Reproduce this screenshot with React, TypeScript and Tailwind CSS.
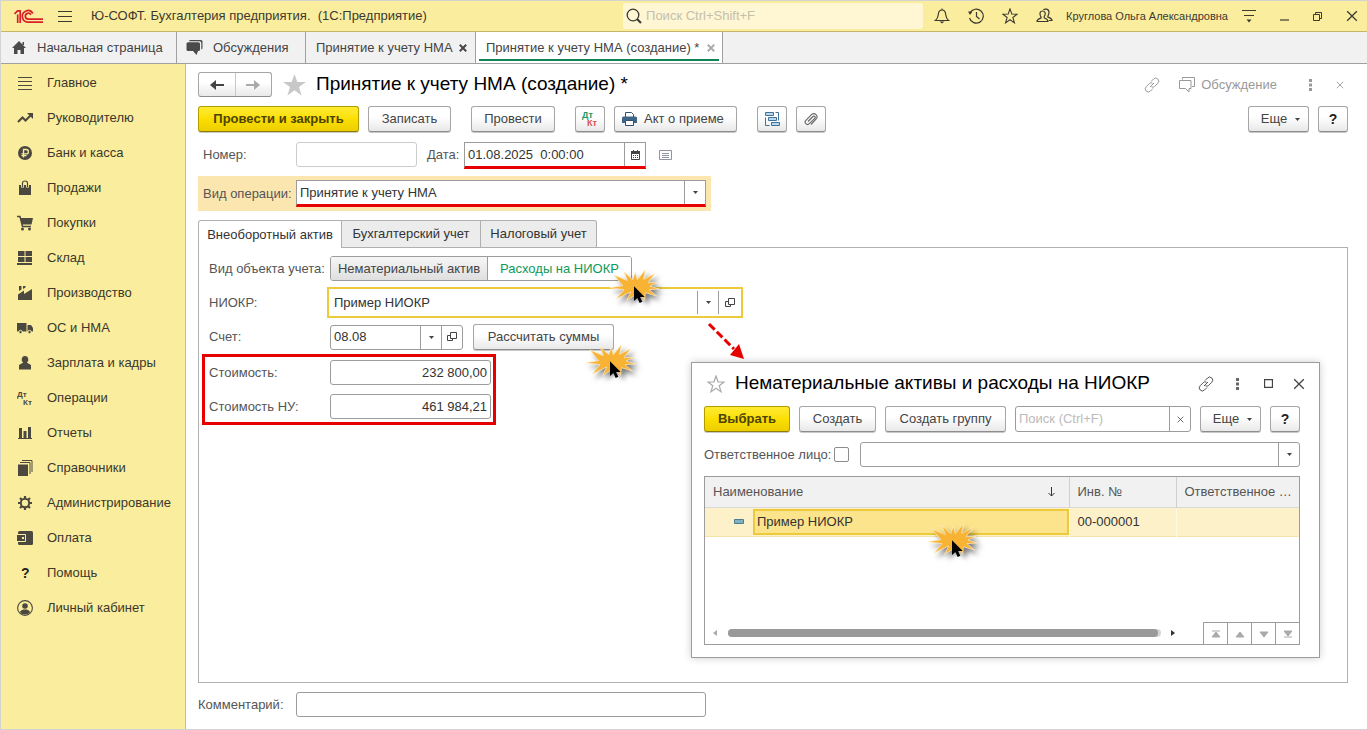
import { useState, type ReactNode } from "react";

const RAISED =
  "border border-[#a6a6a6] border-b-[#8c8c8c] rounded-[3px] bg-linear-to-b from-white from-40% to-[#e9e9e9] shadow-[0_1px_0_#c9c9c9] text-[#444]";
const PRIMARY =
  "border border-[#b39b00] border-b-[#8f7c00] rounded-[3px] bg-linear-to-b from-[#ffeb2e] via-[#fbdf00] to-[#ecce00] shadow-[0_1px_0_#c9c9c9] font-bold text-[#4d4300]";
const FIELD = "flex border border-[#9c9c9c] rounded-[3px] bg-white";
const INPUT = "min-w-0 flex-1 bg-transparent px-[3px] text-[#333] outline-none";

function Svg({
  w,
  h,
  box,
  className = "",
  children,
}: {
  w: number;
  h: number;
  box?: string;
  className?: string;
  children: ReactNode;
}) {
  return (
    <svg
      width={w}
      height={h}
      viewBox={box ?? `0 0 ${w} ${h}`}
      className={`shrink-0 ${className}`}
      fill="none"
      stroke="currentColor"
      aria-hidden="true"
    >
      {children}
    </svg>
  );
}

function Caret() {
  return (
    <Svg w={5} h={3}>
      <path d="M0 0h5L2.5 3z" fill="currentColor" stroke="none" />
    </Svg>
  );
}

function OpenIcon() {
  return (
    <Svg w={10} h={10}>
      <path d="M3.5.5h6v6h-6z" />
      <path d="M3.5 3.5h-3v5h5v-2" />
    </Svg>
  );
}

function LinkIcon() {
  return (
    <Svg w={16} h={16}>
      <path d="M7 4.500 9.500 2a3 3 0 0 1 4.300 0 3 3 0 0 1 0 4.300l-3 3a3 3 0 0 1-3.300.6M9 11.500 6.500 14a3 3 0 0 1-4.300 0 3 3 0 0 1 0-4.300l3-3a3 3 0 0 1 3.300-.6M6 10l4-4" />
    </Svg>
  );
}

function DotsIcon() {
  return (
    <Svg w={3} h={12}>
      <path
        d="M0 0h3v3H0zM0 4.500h3v3H0zM0 9h3v3H0z"
        fill="currentColor"
        stroke="none"
      />
    </Svg>
  );
}

function CrossIcon({ size, bold }: { size: number; bold?: boolean }) {
  return (
    <Svg w={size} h={size} box="0 0 10 10">
      <path d="M1 1l8 8M9 1 1 9" strokeWidth={bold ? 2.4 : 1.1} />
    </Svg>
  );
}

function StarIcon({ size }: { size: number }) {
  return (
    <Svg w={size} h={size} box="0 0 18 18">
      <path d="M9 1l2 5.800 6 .2-4.800 3.700 1.800 6L9 13.200 4 16.700l1.800-6L1 7l6-.2z" strokeWidth="1.200" />
    </Svg>
  );
}

const NAV: { label: string; icon: ReactNode }[] = [
  {
    label: "Главное",
    icon: <path d="M1 2.500h14M1 6.500h14M1 10.500h14M1 14.500h14" />,
  },
  {
    label: "Руководителю",
    icon: (
      <>
        <path d="M1 12l4.500-4.500 3 3L14 5" strokeWidth="2" />
        <path d="M10 3h6v6z" fill="currentColor" stroke="none" />
      </>
    ),
  },
  {
    label: "Банк и касса",
    icon: (
      <>
        <circle cx="8" cy="8" r="7" fill="currentColor" stroke="none" />
        <path
          d="M6.500 12.500V4.500h2.700a2.200 2.200 0 0 1 0 4.400H4.500M4.500 10.700h5"
          stroke="#fbed9e"
          strokeWidth="1.300"
        />
      </>
    ),
  },
  {
    label: "Продажи",
    icon: (
      <>
        <path d="M2 5h12v10H2z" fill="currentColor" stroke="none" />
        <path d="M5.500 7.500V3a2.500 2 0 0 1 5 0v4.500" stroke="#fbed9e" strokeWidth="3" />
        <path d="M5.500 7V3a2.500 2 0 0 1 5 0v4" strokeWidth="1.200" />
      </>
    ),
  },
  {
    label: "Покупки",
    icon: (
      <>
        <path d="M0 1.500h3l2.500 10H14" strokeWidth="1.500" />
        <path d="M3.500 3H16l-1.500 6.500H5z" fill="currentColor" stroke="none" />
        <circle cx="5.500" cy="14" r="1.500" fill="currentColor" stroke="none" />
        <circle cx="12.500" cy="14" r="1.500" fill="currentColor" stroke="none" />
      </>
    ),
  },
  {
    label: "Склад",
    icon: (
      <path
        d="M1 1h6.500v5H1zM8.500 1H15v5H8.500zM1 7h6.500v5H1zM8.500 7H15v5H8.500zM0 13h15v2H0z"
        fill="currentColor"
        stroke="none"
      />
    ),
  },
  {
    label: "Производство",
    icon: (
      <path
        d="M1 15V9.500l6-4V9l8-5v11zM2 1h2.500v3.500L2 6zM6 1h2.500v1.500L6 4z"
        fill="currentColor"
        stroke="none"
      />
    ),
  },
  {
    label: "ОС и НМА",
    icon: (
      <>
        <path
          d="M0 3h9.500v8.500H0zM10.500 5H14l2 3v3.500h-5.500z"
          fill="currentColor"
          stroke="none"
        />
        <circle cx="3.500" cy="12" r="1.700" fill="currentColor" stroke="#fbed9e" />
        <circle cx="12.500" cy="12" r="1.700" fill="currentColor" stroke="#fbed9e" />
      </>
    ),
  },
  {
    label: "Зарплата и кадры",
    icon: (
      <path
        d="M8 1a3.200 3.500 0 0 1 1.800 6.500L14 10v4.500H2V10l4.200-2.500A3.200 3.500 0 0 1 8 1z"
        fill="currentColor"
        stroke="none"
      />
    ),
  },
  {
    label: "Операции",
    icon: (
      <g fill="currentColor" stroke="none" fontSize="8" fontWeight="bold">
        <text x="0" y="7">Дт</text>
        <text x="6" y="15">Кт</text>
      </g>
    ),
  },
  {
    label: "Отчеты",
    icon: (
      <path
        d="M2 3h3v10H2zM6.500 6h3v7h-3zM11 2h3v11h-3zM1 13h14v1H1z"
        fill="currentColor"
        stroke="none"
      />
    ),
  },
  {
    label: "Справочники",
    icon: (
      <>
        <path d="M1 4.500h10V16H1z" fill="currentColor" stroke="none" />
        <path d="M3 2.500h10V14M5 .5h10V12" />
      </>
    ),
  },
  {
    label: "Администрирование",
    icon: (
      <>
        <circle cx="8" cy="8" r="4.200" strokeWidth="2" />
        <path
          d="M8 1v2.500M8 12.500V15M1 8h2.500M12.500 8H15M3 3l2 2M11 11l2 2M3 13l2-2M11 5l2-2"
          strokeWidth="2.200"
        />
      </>
    ),
  },
  {
    label: "Оплата",
    icon: (
      <>
        <rect x="1" y="1" width="15" height="14" rx="1.500" fill="currentColor" stroke="none" />
        <path d="M0 4.500h8.500v7H0" stroke="#fbed9e" />
        <path d="M0 5h8v6H0z" fill="currentColor" stroke="none" />
        <path d="M5 7h2v2H5z" fill="#fbed9e" stroke="none" />
      </>
    ),
  },
  {
    label: "Помощь",
    icon: (
      <text x="4" y="13" fill="#222" stroke="none" fontSize="14" fontWeight="bold">
        ?
      </text>
    ),
  },
  {
    label: "Личный кабинет",
    icon: (
      <>
        <circle cx="8" cy="8" r="7.400" strokeWidth="1.100" />
        <circle cx="8" cy="6" r="2.800" fill="currentColor" stroke="none" />
        <path
          d="M2.800 12c1.500-2 3-2.500 5.200-2.500s3.700.5 5.200 2.500A6.500 6.500 0 0 1 8 14.500 6.500 6.500 0 0 1 2.800 12z"
          fill="currentColor"
          stroke="none"
        />
      </>
    ),
  },
];

function TitleBar() {
  return (
    <header className="flex h-[31px] shrink-0 items-center border-b border-[#c4b56a] bg-[#fbed9e] text-[#3c3a30]">
      <Svg w={30} h={16} className="ml-[13px] text-[#d6202a]">
        <path d="M.5 6l3-3.200H6.200V15M3.700 15V6.500" strokeWidth="1.700" />
        <path
          d="M18.800 5.500A5.600 5.800 0 1 0 14 14.200H29M16.800 6.800a2.900 3 0 1 0-2.600 4.400H29"
          strokeWidth="1.700"
        />
      </Svg>
      <button type="button" aria-label="Меню" className="ml-[14px]">
        <Svg w={14} h={11}>
          <path d="M0 .5h14M0 5.500h14M0 10.500h14" />
        </Svg>
      </button>
      <h1 className="ml-[19px] whitespace-pre">
        Ю-СОФТ. Бухгалтерия предприятия.{"  "}(1С:Предприятие)
      </h1>
      <div className="ml-auto flex h-[26px] w-[300px] items-center gap-1 rounded-[3px] bg-[#fff6d3] px-[3px]">
        <Svg w={16} h={16}>
          <circle cx="7" cy="7" r="5.800" strokeWidth="1.300" />
          <path d="M11 11l4 4" strokeWidth="2.200" />
        </Svg>
        <input
          aria-label="Поиск"
          placeholder="Поиск Ctrl+Shift+F"
          className="min-w-0 flex-1 bg-transparent outline-none placeholder:text-[#c4c0ad]"
        />
      </div>
      <div className="ml-[11px] flex items-center gap-[18px]">
        <button type="button" aria-label="Уведомления">
          <Svg w={16} h={16}>
            <path d="M1.500 12.500c2-1.500 2.500-3.500 2.800-6C4.500 4 5.500 2 8 2s3.500 2 3.700 4.500c.3 2.500.8 4.500 2.800 6z" strokeWidth="1.200" />
            <path d="M8 2V.5" />
            <path d="M5.500 13.500h5L8 15.500z" fill="currentColor" stroke="none" />
          </Svg>
        </button>
        <button type="button" aria-label="История">
          <Svg w={16} h={16}>
            <path d="M2 5a7 7 0 1 1-.5 5M8.500 4v4.500l3 2.500" strokeWidth="1.200" />
            <path d="M0 3.500h4.500L2 7z" fill="currentColor" stroke="none" />
          </Svg>
        </button>
        <button type="button" aria-label="Избранное">
          <StarIcon size={16} />
        </button>
        <button type="button" aria-label="Пользователь">
          <Svg w={18} h={16}>
            <path
              d="M1 13.500c0-2 1.500-2.500 4-3.500.5-.5 0-1-.5-2C3.500 5.500 4 3 6.500 3s3.500 2.500 2 5c-.5 1-.5 1.500 0 2 2.500 1 3.500 1.500 3.500 3.500zM7.500 2c1-1.500 5.500-1.500 5.500 2.500 0 2-1.200 3-1.200 4.500 2.200 1 4.200 1.500 4.200 3.500h-3"
              strokeWidth="1.200"
            />
          </Svg>
        </button>
      </div>
      <span className="ml-3 text-[11px]">Круглова Ольга Александровна</span>
      <div className="mr-[9px] ml-[14px] flex items-center gap-6">
        <button type="button" aria-label="Настройки">
          <Svg w={14} h={14}>
            <path d="M0 1.500h14M2 6.500h10" strokeWidth="1.200" />
            <path d="M4.500 10.500h5L7 13.500z" fill="currentColor" stroke="none" />
          </Svg>
        </button>
        <button type="button" aria-label="Свернуть">
          <Svg w={9} h={10}>
            <path d="M0 9h9" strokeWidth="1.200" />
          </Svg>
        </button>
        <button type="button" aria-label="Развернуть">
          <Svg w={9} h={9}>
            <path d="M.5 2.500h6v6h-6zM2.500 2.500v-2h6v6h-2" />
          </Svg>
        </button>
        <button type="button" aria-label="Закрыть">
          <CrossIcon size={12} />
        </button>
      </div>
    </header>
  );
}

function WindowTabs() {
  return (
    <nav className="flex h-8 shrink-0 border-b border-[#a0a0a0] bg-[#f1f1f1] text-[#444]">
      <button type="button" className="flex w-[176px] items-center border-r border-[#a0a0a0] pl-[10px]">
        <Svg w={16} h={14} className="text-[#4a4a4a]">
          <path
            d="M8 0 1 7h2v6h3.500V9h3v4H13V7h2zM11.500 1H13v3h-1.500z"
            fill="currentColor"
            stroke="none"
          />
        </Svg>
        <span className="ml-[10px]">Начальная страница</span>
      </button>
      <button type="button" className="flex w-[129px] items-center border-r border-[#a0a0a0] pl-[9px]">
        <Svg w={18} h={16} className="text-[#4a4a4a]">
          <path
            d="M4 0h11a1.500 1.500 0 0 1 1.500 1.500V8a1.500 1.500 0 0 1-1.200 1.400V3A1.700 1.700 0 0 0 13.600 1.300H3A1.300 1.300 0 0 1 4 0z"
            fill="currentColor"
            stroke="none"
          />
          <path
            d="M2 2.300h10.500A1.500 1.500 0 0 1 14 3.800v5.700a1.500 1.500 0 0 1-1.500 1.500H12l-1.500 4L7 11H2A1.500 1.500 0 0 1 .5 9.500V3.800A1.500 1.500 0 0 1 2 2.300z"
            fill="currentColor"
            stroke="none"
          />
        </Svg>
        <span className="ml-[9px]">Обсуждения</span>
      </button>
      <div className="flex w-[170px] items-center justify-between border-r border-[#a0a0a0] pr-2 pl-[10px]">
        <button type="button">Принятие к учету НМА</button>
        <button type="button" aria-label="Закрыть вкладку">
          <CrossIcon size={8} bold />
        </button>
      </div>
      <div className="flex w-[247px] border-r border-[#a0a0a0] bg-white px-[3px] pb-[2px]">
        <div className="flex flex-1 items-center justify-between border-b-2 border-[#0f8457] pt-1 pr-1 pl-[7px]">
          <button type="button">Принятие к учету НМА (создание) *</button>
          <button type="button" aria-label="Закрыть вкладку" className="text-[#aaa]">
            <CrossIcon size={8} bold />
          </button>
        </div>
      </div>
    </nav>
  );
}

function Sidebar() {
  return (
    <aside className="w-[185px] shrink-0 border-r border-[#c9bf85] bg-[#fbed9e] pt-px">
      {NAV.map((item) => (
        <a
          key={item.label}
          href="#"
          className="flex h-[35px] items-center gap-[13px] pl-4 text-[#3a382c]"
        >
          <Svg w={17} h={16} className="text-[#4b4840]">
            {item.icon}
          </Svg>
          {item.label}
        </a>
      ))}
    </aside>
  );
}

function FormHeader() {
  return (
    <div className="flex h-[25px] items-center text-[#999]">
      <div className="flex h-[25px] w-[74px] overflow-hidden rounded-[3px] border border-[#a6a6a6] border-b-[#8c8c8c] bg-linear-to-b from-white from-40% to-[#e9e9e9]">
        <button type="button" aria-label="Назад" className="flex flex-1 items-center justify-center border-r border-[#c8c8c8] text-[#444]">
          <Svg w={14} h={10}>
            <path d="M3 5h11" strokeWidth="2" />
            <path d="M6 0v10L0 5z" fill="currentColor" stroke="none" />
          </Svg>
        </button>
        <button type="button" aria-label="Вперед" className="flex flex-1 items-center justify-center text-[#aaa]">
          <Svg w={14} h={10}>
            <path d="M0 5h11" strokeWidth="2" />
            <path d="M8 0v10l6-5z" fill="currentColor" stroke="none" />
          </Svg>
        </button>
      </div>
      <button type="button" aria-label="В избранное" className="ml-[11px] text-[#c8c8c8]">
        <Svg w={23} h={22}>
          <path
            d="M11.500 0l2.800 8H23l-7 5 2.600 8.500-7.100-5.200-7.100 5.200L7 13 0 8h8.700z"
            fill="currentColor"
            stroke="none"
          />
        </Svg>
      </button>
      <h2 className="ml-[10px] text-[19px] text-black">Принятие к учету НМА (создание) *</h2>
      <button type="button" aria-label="Ссылка" className="ml-auto">
        <LinkIcon />
      </button>
      <button type="button" className="ml-[18px] flex items-center gap-[6px]">
        <Svg w={17} h={16}>
          <path d="M4.500 2.500v-2h12v9h-2.500M1.500 3.500H13v8h-2v3.500l-3.500-3.500h-6z" />
        </Svg>
        Обсуждение
      </button>
      <button type="button" aria-label="Меню формы" className="ml-8">
        <DotsIcon />
      </button>
      <button type="button" aria-label="Закрыть форму" className="mr-1 ml-6">
        <CrossIcon size={8} />
      </button>
    </div>
  );
}

function Toolbar() {
  return (
    <div className="mt-[9px] flex h-[26px]">
      <button type="button" className={`w-[161px] ${PRIMARY}`}>
        Провести и закрыть
      </button>
      <button type="button" className={`ml-[9px] w-[83px] ${RAISED}`}>
        Записать
      </button>
      <button type="button" className={`ml-5 w-[84px] ${RAISED}`}>
        Провести
      </button>
      <button type="button" aria-label="Дт Кт" className={`ml-5 flex w-[30px] items-center justify-center ${RAISED}`}>
        <Svg w={18} h={16}>
          <g stroke="none" fontSize="9" fontWeight="bold">
            <text x="1" y="7" fill="#1d9660">Дт</text>
            <text x="6" y="15" fill="#d9534f">Кт</text>
          </g>
        </Svg>
      </button>
      <button type="button" className={`ml-[9px] flex w-[123px] items-center gap-[7px] pl-[7px] ${RAISED}`}>
        <Svg w={15} h={14} className="text-[#30506c]">
          <path d="M3.500 5V.5h6l2 2V5" fill="#fff" />
          <path d="M1.500 4.500h12A1.500 1.500 0 0 1 15 6v5H0V6a1.500 1.500 0 0 1 1.500-1.500z" fill="#3d6587" stroke="none" />
          <path d="M3.500 8.500h8v5h-8z" fill="#fff" />
        </Svg>
        Акт о приеме
      </button>
      <button type="button" aria-label="Структура подчиненности" className={`ml-5 flex w-[30px] items-center justify-center ${RAISED}`}>
        <Svg w={15} h={15} className="text-[#3f7296]">
          <path d="M.5.5h8v3h-8zM3.500 5.500h8v3h-8zM6.500 10.500h8v3h-8z" fill="#b9d8ee" />
          <path d="M10.500.5h3v8M4.500 13.500h-4v-8" />
        </Svg>
      </button>
      <button type="button" aria-label="Файлы" className={`ml-[9px] flex w-[30px] items-center justify-center ${RAISED}`}>
        <Svg w={14} h={14} className="text-[#666]">
          <path
            d="M4 9.500l5-5a1.200 1.200 0 0 1 1.800 1.800l-5.500 5.400a2.300 2.300 0 0 1-3.400-3.400L7.500 2.700a3.100 3.100 0 0 1 4.500 4.500L7 12.500"
            strokeWidth="1.100"
          />
        </Svg>
      </button>
      <button type="button" className={`ml-auto flex w-[61px] items-center justify-center gap-2 pl-1 ${RAISED}`}>
        Еще <Caret />
      </button>
      <button type="button" aria-label="Справка" className={`ml-[9px] w-[30px] ${RAISED}`}>
        <b className="text-sm text-[#222]">?</b>
      </button>
    </div>
  );
}

function HeaderFields() {
  return (
    <>
      <div className="mt-[10px] flex h-[27px] items-start pl-[5px] text-[#555]">
        <label htmlFor="number" className="w-[93px] leading-[26px]">
          Номер:
        </label>
        <div className="flex h-[25px] w-[121px] rounded-[3px] border border-[#ccc] bg-white">
          <input id="number" className={INPUT} />
        </div>
        <label htmlFor="date" className="ml-[10px] w-[37px] leading-[26px] whitespace-nowrap">
          Дата:
        </label>
        <div className="flex h-[27px] w-[182px] border border-b-[3px] border-[#9c9c9c] border-b-[#e60000] bg-white">
          <input id="date" defaultValue="01.08.2025  0:00:00" className={INPUT} />
          <button type="button" aria-label="Выбрать дату" className="flex w-[21px] items-center justify-center border-l border-[#9c9c9c] text-[#444]">
            <Svg w={9} h={10}>
              <path d="M.5 2.500h8v7h-8z" />
              <path d="M0 1h9v3H0zM2 0h1v1H2zM6 0h1v1H6z" fill="currentColor" stroke="none" />
              <path d="M2 5.500h5M2 7.500h5" strokeDasharray="1 1" />
            </Svg>
          </button>
        </div>
        <button type="button" aria-label="Режим нумерации" className="mt-2 ml-[13px] text-[#8d93a3]">
          <Svg w={13} h={10}>
            <path d="M.5.5h12v9H.5zM3 3.500h7M3 5.500h7M3 7.500h7" />
          </Svg>
        </button>
      </div>
      <div className="mt-[7px] flex h-[35px] w-[513px] items-center bg-[#fce6b0] pl-[5px] text-[#555]">
        <label htmlFor="operation" className="w-[93px] whitespace-nowrap">
          Вид операции:
        </label>
        <div className="relative flex h-[27px] w-[410px] border border-b-[3px] border-[#9c9c9c] border-b-[#e60000] bg-white">
          <select id="operation" className={`appearance-none ${INPUT}`}>
            <option>Принятие к учету НМА</option>
          </select>
          <span className="flex w-[21px] items-center justify-center border-l border-[#9c9c9c] text-[#444]">
            <Caret />
          </span>
        </div>
      </div>
    </>
  );
}

const TABS = [
  { label: "Внеоборотный актив", width: "w-[144px]" },
  { label: "Бухгалтерский учет", width: "w-[139px]" },
  { label: "Налоговый учет", width: "w-[116px]" },
];

function AssetForm() {
  const [kind, setKind] = useState("rnd");
  const active = "bg-white text-[#0f9a5a]";
  const idle = "bg-linear-to-b from-[#f6f6f6] to-[#dfdfdf] text-[#444]";

  return (
    <div className="pt-2 text-[#555]">
      <div className="flex h-[25px] items-center pl-[10px]">
        <span className="w-[121px] whitespace-nowrap">Вид объекта учета:</span>
        <div className="flex h-[25px] w-[302px] overflow-hidden rounded-[3px] border border-[#9c9c9c]">
          <button
            type="button"
            onClick={() => setKind("asset")}
            className={`w-[157px] border-r border-[#9c9c9c] ${kind === "asset" ? active : idle}`}
          >
            Нематериальный актив
          </button>
          <button
            type="button"
            onClick={() => setKind("rnd")}
            className={`flex-1 ${kind === "rnd" ? active : idle}`}
          >
            Расходы на НИОКР
          </button>
        </div>
      </div>

      <div className="mt-[6px] flex h-[31px] items-center pl-[10px]">
        <label htmlFor="rnd" className="w-[118px]">
          НИОКР:
        </label>
        <div className="flex h-[31px] w-[416px] border-2 border-[#ecca3a] bg-white py-[2px] text-[#444]">
          <input id="rnd" defaultValue="Пример НИОКР" className={`pl-[5px] ${INPUT}`} />
          <button type="button" aria-label="Выбрать НИОКР" className="flex w-[21px] items-center justify-center border-l border-[#9c9c9c]">
            <Caret />
          </button>
          <button type="button" aria-label="Открыть НИОКР" className="flex w-[23px] items-center justify-center border-l border-[#9c9c9c]">
            <OpenIcon />
          </button>
        </div>
      </div>

      <div className="mt-[6px] flex h-[26px] items-center pl-[10px]">
        <label htmlFor="account" className="w-[121px]">
          Счет:
        </label>
        <div className={`h-[25px] w-[133px] text-[#444] ${FIELD}`}>
          <input id="account" defaultValue="08.08" className={INPUT} />
          <button type="button" aria-label="Выбрать счет" className="flex w-[21px] items-center justify-center border-l border-[#9c9c9c]">
            <Caret />
          </button>
          <button type="button" aria-label="Открыть счет" className="flex w-[21px] items-center justify-center border-l border-[#9c9c9c]">
            <OpenIcon />
          </button>
        </div>
        <button type="button" className={`ml-[10px] h-[26px] w-[141px] ${RAISED}`}>
          Рассчитать суммы
        </button>
      </div>

      <div className="mt-1 ml-[3px] flex w-[294px] flex-col gap-[9px] border-[3px] border-[#e60000] py-[3px] pl-1">
        <div className="flex items-center">
          <label htmlFor="cost" className="w-[121px]">
            Стоимость:
          </label>
          <div className={`h-[25px] w-[161px] ${FIELD}`}>
            <input id="cost" defaultValue="232 800,00" className={`text-right ${INPUT}`} />
          </div>
        </div>
        <div className="flex items-center">
          <label htmlFor="cost-tax" className="w-[121px]">
            Стоимость НУ:
          </label>
          <div className={`h-[25px] w-[161px] ${FIELD}`}>
            <input id="cost-tax" defaultValue="461 984,21" className={`text-right ${INPUT}`} />
          </div>
        </div>
      </div>
    </div>
  );
}

function PickerDialog() {
  return (
    <section
      role="dialog"
      aria-label="Нематериальные активы и расходы на НИОКР"
      className="absolute top-[114px] left-[492px] w-[629px] border border-[#9c9c9c] bg-white pr-[19px] pb-3 pl-3 text-[#444] shadow-[0_0_8px_rgba(0,0,0,0.2)]"
    >
      <div className="mt-2 flex h-[25px] items-center">
        <button type="button" aria-label="В избранное" className="ml-[3px] text-[#aaa]">
          <StarIcon size={18} />
        </button>
        <h3 className="ml-[10px] text-[19px] whitespace-nowrap text-black">
          Нематериальные активы и расходы на НИОКР
        </h3>
        <button type="button" aria-label="Ссылка" className="ml-auto text-[#555]">
          <LinkIcon />
        </button>
        <button type="button" aria-label="Меню окна" className="ml-[22px] text-[#666]">
          <DotsIcon />
        </button>
        <button type="button" aria-label="Развернуть" className="ml-[25px]">
          <Svg w={9} h={9}>
            <path d="M.5.5h8v8h-8z" strokeWidth="1.300" />
          </Svg>
        </button>
        <button type="button" aria-label="Закрыть" className="mr-[-5px] ml-5">
          <CrossIcon size={12} />
        </button>
      </div>

      <div className="mt-[10px] flex h-[26px]">
        <button type="button" className={`w-[86px] ${PRIMARY}`}>
          Выбрать
        </button>
        <button type="button" className={`ml-[9px] w-[77px] ${RAISED}`}>
          Создать
        </button>
        <button type="button" className={`ml-[9px] w-[121px] ${RAISED}`}>
          Создать группу
        </button>
        <div className={`ml-[9px] min-w-0 flex-1 ${FIELD}`}>
          <input aria-label="Поиск" placeholder="Поиск (Ctrl+F)" className={`placeholder:text-[#bbb] ${INPUT}`} />
          <button type="button" aria-label="Очистить" className="flex w-[21px] items-center justify-center border-l border-[#9c9c9c]">
            <CrossIcon size={7} />
          </button>
        </div>
        <button type="button" className={`ml-[9px] flex w-[61px] items-center justify-center gap-2 pl-1 ${RAISED}`}>
          Еще <Caret />
        </button>
        <button type="button" aria-label="Справка" className={`ml-[9px] w-[30px] ${RAISED}`}>
          <b className="text-sm text-[#222]">?</b>
        </button>
      </div>

      <div className="mt-[10px] flex h-[25px] items-center text-[#555]">
        <label htmlFor="use-person" className="w-[130px] whitespace-nowrap">
          Ответственное лицо:
        </label>
        <input
          id="use-person"
          type="checkbox"
          className="size-[15px] appearance-none rounded-[2px] border border-[#8c8c8c] bg-white checked:bg-[#0f9a5a]"
        />
        <div className={`ml-[11px] h-[25px] min-w-0 flex-1 ${FIELD}`}>
          <select aria-label="Ответственное лицо" className={`appearance-none ${INPUT}`}>
            <option value=""></option>
          </select>
          <span className="flex w-[21px] items-center justify-center border-l border-[#9c9c9c] text-[#444]">
            <Caret />
          </span>
        </div>
      </div>

      <div className="mt-[9px] flex h-[169px] flex-col border border-[#9c9c9c]">
        <table className="w-full table-fixed border-collapse text-left">
          <thead>
            <tr className="h-[30px] border-b border-[#d9d9d9] bg-[#f1f1f1] text-[#555]">
              <th className="w-[364px] border-r border-[#d0d0d0] px-2 font-normal">
                <span className="flex items-center justify-between pr-[6px]">
                  Наименование
                  <Svg w={7} h={10} className="text-[#333]">
                    <path d="M3.500 0v9M.5 6l3 3 3-3" />
                  </Svg>
                </span>
              </th>
              <th className="w-[107px] border-r border-[#d0d0d0] px-2 font-normal">Инв. №</th>
              <th className="pl-2 font-normal whitespace-nowrap">Ответственное …</th>
            </tr>
          </thead>
          <tbody>
            <tr className="h-[29px] border-b border-[#f3e3ab] bg-[#fdf1ca] text-[#333]">
              <td className="border-r border-[#fff8e2] p-0">
                <span className="flex items-center">
                  <Svg w={10} h={5} className="mr-[9px] ml-[29px] text-[#4f7d90]">
                    <path d="M.5.5h9v4h-9z" fill="#7fb0c4" />
                  </Svg>
                  <span className="h-[26px] flex-1 border-2 border-[#ecca3a] bg-[#fce48c] pl-[2px] leading-[22px]">
                    Пример НИОКР
                  </span>
                </span>
              </td>
              <td className="border-r border-[#fff8e2] px-2">00-000001</td>
              <td></td>
            </tr>
          </tbody>
        </table>
        <div className="mt-auto flex h-[22px] items-center pl-2">
          <Svg w={5} h={6} className="text-[#aaa]">
            <path d="M4 0v6L0 3z" fill="currentColor" stroke="none" />
          </Svg>
          <div className="ml-[10px] h-2 w-[433px] rounded-full bg-[#d6d6d6] pr-[3px]">
            <div className="h-2 rounded-full bg-[#999]" />
          </div>
          <Svg w={5} h={6} className="ml-[10px] text-[#333]">
            <path d="M0 0v6l4-3z" fill="currentColor" stroke="none" />
          </Svg>
          <div className="ml-auto flex h-[22px] border-t border-[#9c9c9c] text-[#aaa]">
            {[
              { label: "В начало", d: "M2 1h8M6 2l4 5H2z" },
              { label: "Вверх", d: "M6 2l4 5H2z" },
              { label: "Вниз", d: "M2 2h8L6 7z" },
              { label: "В конец", d: "M2 1h8L6 6zM2 7h8" },
            ].map((b) => (
              <button
                key={b.label}
                type="button"
                aria-label={b.label}
                className="flex w-6 items-center justify-center border-l border-[#9c9c9c]"
              >
                <Svg w={12} h={8}>
                  <path d={b.d} fill="currentColor" />
                </Svg>
              </button>
            ))}
          </div>
        </div>
      </div>
    </section>
  );
}

// Click marker: a burst with the mouse pointer over it
function ClickMark({ className }: { className: string }) {
  return (
    <svg
      width="50"
      height="36"
      viewBox="0 0 150 108"
      className={`pointer-events-none absolute overflow-visible ${className}`}
      aria-hidden="true"
    >
      <path
        className="drop-shadow-[10px_12px_8px_rgba(0,0,0,0.5)]"
        d="M0 56 38 50 12 18 52 35 42 8 68 32 76 10 82 32 106 2 101 31 134 14 114 41 144 40 120 51 148 60 117 62 140 81 106 71 104 94 84 73 50 94 62 69 18 90 42 62z"
        fill="#f8b234"
        stroke="#fff0cc"
        strokeWidth="2"
      />
      <path d="M72 52v44l10-9 7 15 8-4-7-14h14z" fill="#000" />
    </svg>
  );
}

function Arrow() {
  return (
    <svg
      width="38"
      height="38"
      className="pointer-events-none absolute top-[74px] left-[508px]"
      aria-hidden="true"
    >
      <path d="M2 2l25 25" stroke="#e60000" strokeWidth="3" strokeDasharray="8 3" />
      <path d="M37 37 23 33l9-11z" fill="#e60000" />
    </svg>
  );
}

export default function App() {
  const [tab, setTab] = useState(0);

  return (
    <div className="flex min-h-screen flex-col border border-[#d3d3d3] bg-white font-['Liberation_Sans',Arial,sans-serif] text-[13px]">
      <TitleBar />
      <WindowTabs />
      <div className="flex flex-1">
        <Sidebar />
        <main className="flex min-w-0 flex-1 flex-col pt-2 pr-[19px] pb-3 pl-3">
          <FormHeader />
          <Toolbar />
          <HeaderFields />

          <div className="relative z-10 mt-[9px] flex h-7">
            {TABS.map((t, i) => (
              <button
                key={t.label}
                type="button"
                onClick={() => setTab(i)}
                className={`border-t border-r border-[#b0b0b0] text-[#333] first:rounded-tl-[3px] first:border-l last:rounded-tr-[3px] ${t.width} ${
                  i === tab ? "bg-white" : "border-b bg-[#ececec]"
                }`}
              >
                {t.label}
              </button>
            ))}
          </div>
          <div className="relative mt-[-1px] flex-1 border border-[#b0b0b0]">
            <AssetForm />
            <PickerDialog />
            <Arrow />
            <ClickMark className="top-[21px] left-[411px]" />
            <ClickMark className="top-[96px] left-[387px]" />
            <ClickMark className="top-[275px] left-[729px]" />
          </div>

          <div className="mt-[9px] flex items-center text-[#555]">
            <label htmlFor="comment" className="w-[98px]">
              Комментарий:
            </label>
            <div className={`h-[25px] w-[410px] ${FIELD}`}>
              <input id="comment" className={INPUT} />
            </div>
          </div>
        </main>
      </div>
    </div>
  );
}
